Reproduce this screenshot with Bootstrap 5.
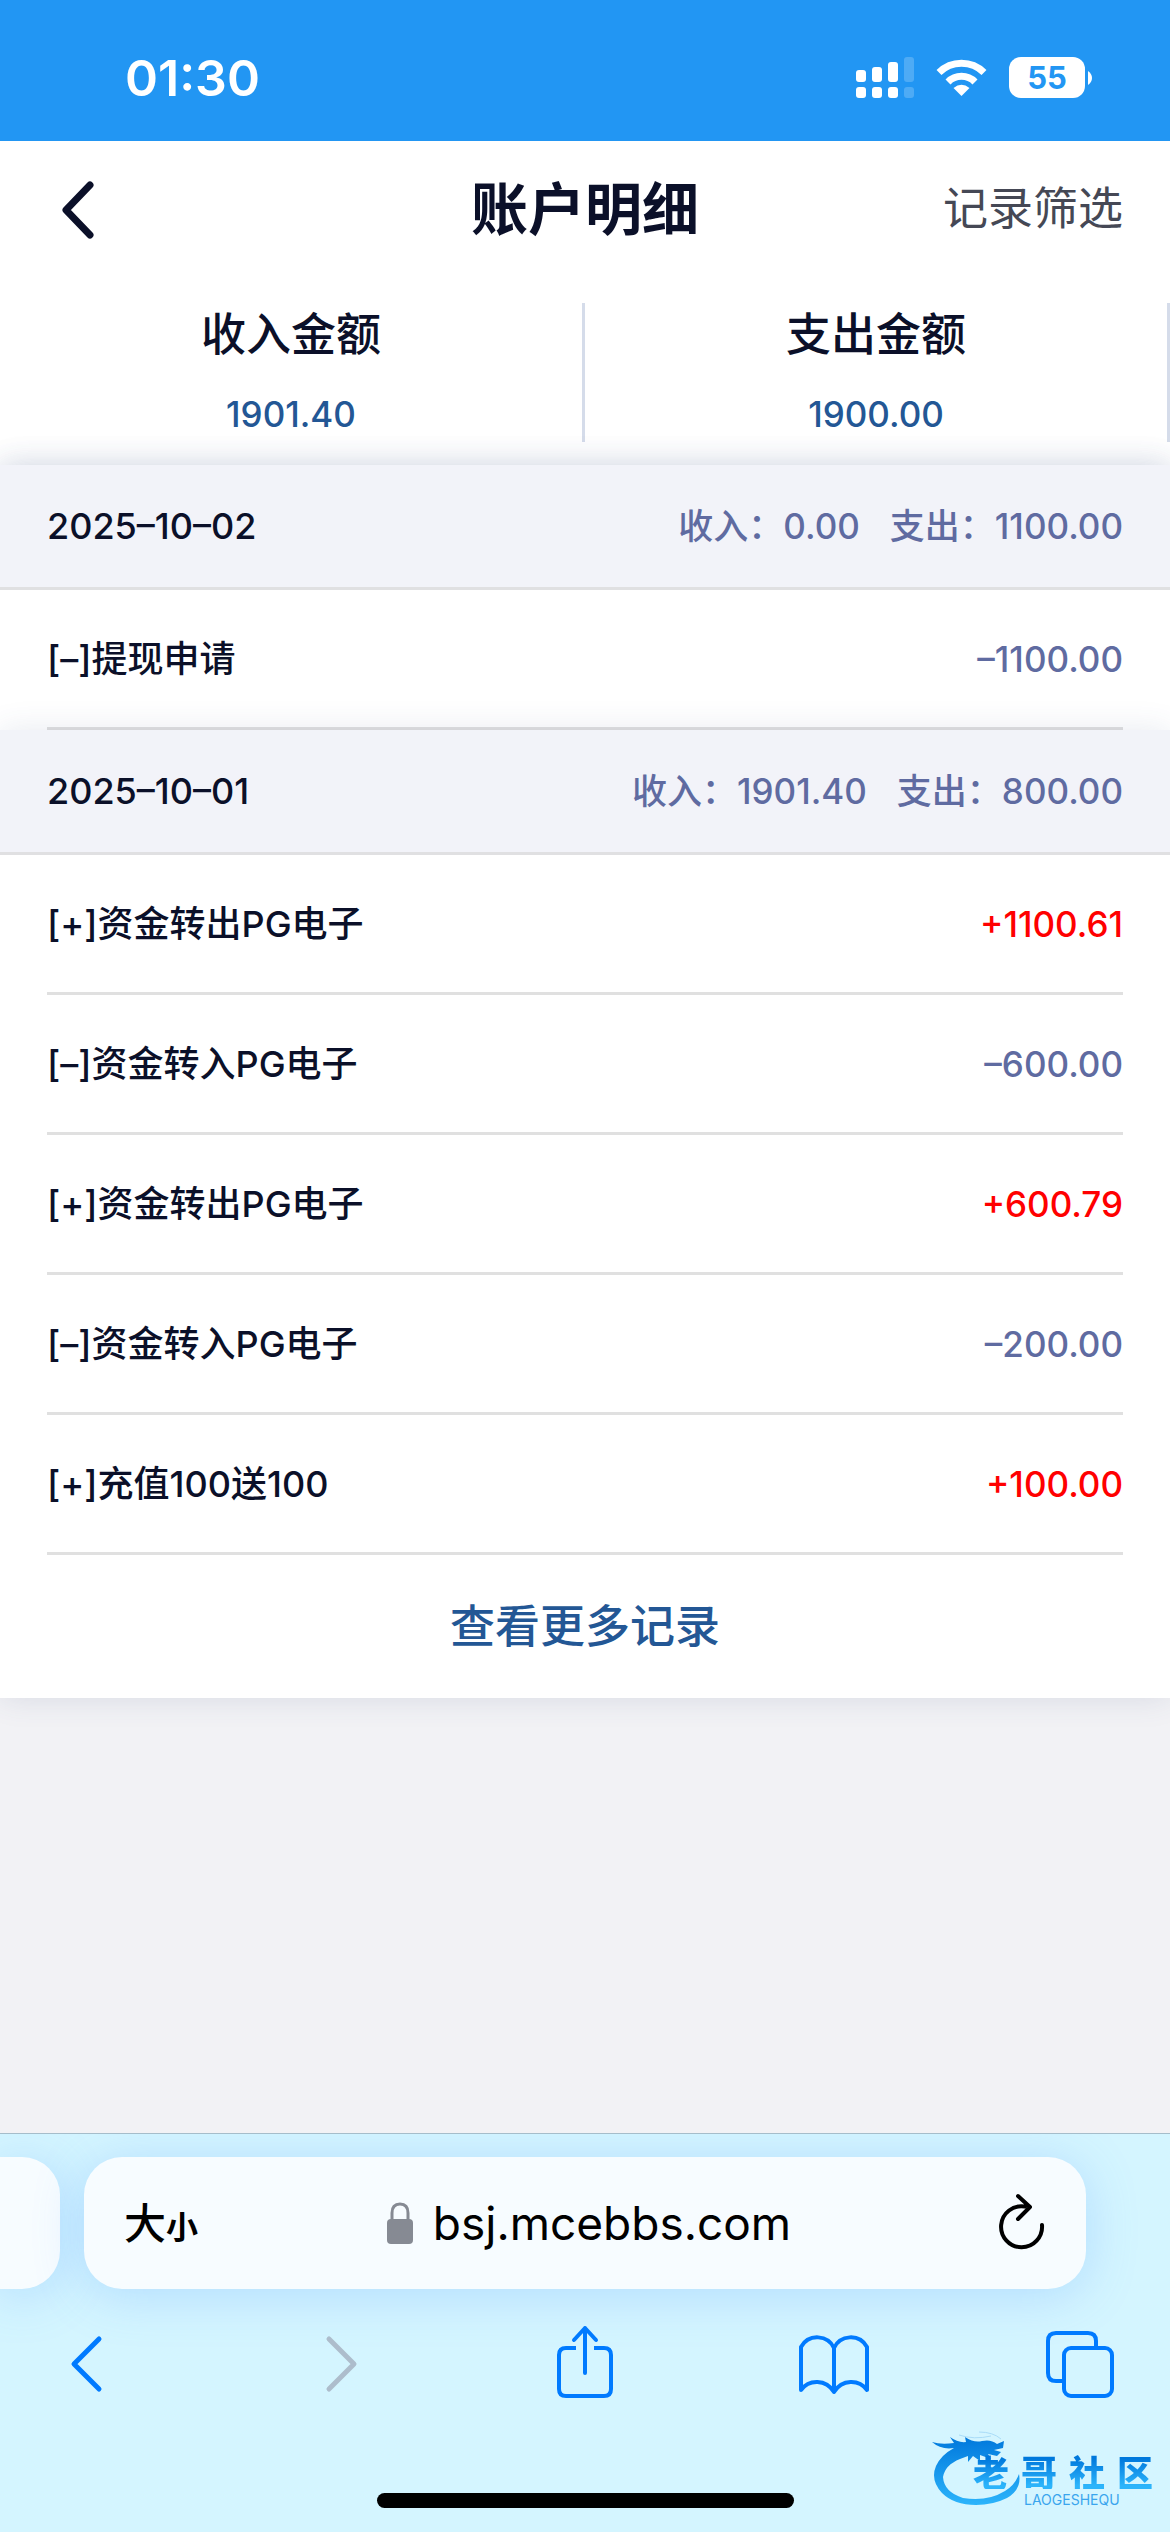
<!DOCTYPE html>
<html lang="zh-CN">
<head>
<meta charset="utf-8">
<meta name="viewport" content="width=device-width, initial-scale=1">
<title>账户明细</title>
<link href="https://cdn.jsdelivr.net/npm/bootstrap@5.3.0/dist/css/bootstrap.min.css" rel="stylesheet">
<style>
  body {
    font-family: Inter, "Noto Sans CJK SC", sans-serif;
    font-size: 36px; font-weight: 500; line-height: 54px;
    color: #0b1029; background: #f2f2f5;
  }
  .status-strip { height: 141px; padding: 14px 78px 0 125px; background: #2296f3; color: #fff; }
  .clock { font-size: 50px; font-weight: 600; line-height: 64px; }
  .status-icons { gap: 22px; }
  .battery { gap: 2px; }
  .battery-level { width: 76px; height: 41px; border-radius: 12px; background: #fff; color: #2296f3; font-size: 31px; font-weight: 700; line-height: 41px; }
  .topbar { height: 138px; padding: 0 47px; background: #fff; }
  .page-title { font-size: 57px; font-weight: 700; line-height: 72px; }
  .filter-link { font-size: 45px; font-weight: 400; color: #454855; text-decoration: none; }
  .totals { padding: 24px 0 23px; background: #fff; }
  .total-cell { height: 139px; border-right: 3px solid #d5dcea; }
  .total-label { font-size: 45px; line-height: 64px; margin-bottom: 20px; }
  .total-value { color: #235795; font-size: 35px; }
  .ledger { box-shadow: 0 0 30px rgba(60, 80, 130, .14); }
  .day-head { height: 125px; padding: 0 47px; background: #f2f3f9; border-bottom: 3px solid #e0e0e2; box-shadow: 0 0 30px rgba(60, 80, 130, .12); }
  .day-sums { gap: 30px; color: #5f6ba1; font-size: 35px; }
  .entries { padding: 0 47px; background: #fff; }
  .entry { height: 140px; border-bottom: 3px solid #e0e0e0; }
  .money-out { color: #5f6ba1; font-size: 35px; }
  .money-in { color: #f00; font-size: 35px; }
  .more-link { height: 143px; background: #fff; color: #235795; font-size: 45px; text-decoration: none; }
  .browser-bar { padding: 23px 0 24px; background: #d4f5ff; border-top: 1px solid #a5bdca; font-weight: 400; overflow: hidden; }
  .tab-row { gap: 24px; padding-right: 84px; }
  .tab-pill { height: 132px; background: #f7fcff; box-shadow: 0 6px 50px rgba(80, 150, 255, .26); }
  .tab-prev { width: 60px; border-radius: 0 38px 38px 0; }
  .tab-current { border-radius: 38px; padding: 0 40px; }
  .side-slot { width: 80px; font-weight: 500; }
  .size-label { padding-top: 6px; }
  .size-big { font-size: 42px; }
  .size-small { font-size: 32px; font-weight: 700; }
  .tool-row { padding: 0 50px; margin-top: 35px; margin-bottom: 93px; }
  .home-line { width: 417px; height: 15px; border-radius: 8px; background: #000; }
  .plain-btn { padding: 0; border: 0; background: none; color: inherit; display: flex; align-items: center; }
  .plain-btn.address { gap: 20px; padding-left: 8px; font-size: 46px; color: #000; }
  .site-logo { right: 17px; bottom: 20px; width: 224px; height: 84px; }
  .logo-text { left: 44px; right: 0; top: 25px; font-size: 36px; font-weight: 900; line-height: 36px; font-family: "Noto Sans CJK SC", sans-serif; }
  .logo-text span { background: linear-gradient(#0078dc 15%, #2cb4fb 90%); -webkit-background-clip: text; background-clip: text; color: transparent; }
  .logo-sub { left: 95px; top: 66px; font-size: 14px; line-height: 12px; color: #3aa5ee; }
  .stroke-icon { fill: none; stroke: currentColor; stroke-linecap: round; stroke-linejoin: round; }
  .tint { color: #007aff; }
  .tint-off { color: #adbdcc; }
</style>
<script src="https://cdn.jsdelivr.net/npm/bootstrap@5.3.0/dist/js/bootstrap.bundle.min.js"></script>
</head>
<body class="d-flex flex-column min-vh-100">

<div class="status-strip d-flex align-items-center justify-content-between">
  <span class="clock">01:30</span>
  <div class="status-icons d-flex align-items-center">
    <svg width="58" height="41" viewBox="0 0 58 41" fill="#fff" aria-hidden="true">
      <rect x="0" y="13" width="10" height="12" rx="3"/><rect x="16" y="10" width="10" height="15" rx="3"/><rect x="32" y="5" width="10" height="20" rx="3"/><rect x="48" y="0" width="10" height="25" rx="3" opacity=".2"/>
      <rect x="0" y="30" width="10" height="11" rx="3"/><rect x="16" y="30" width="10" height="11" rx="3"/><rect x="32" y="30" width="10" height="11" rx="3"/><rect x="48" y="30" width="10" height="11" rx="3" opacity=".2"/>
    </svg>
    <svg width="51" height="37" viewBox="0 0 51 37" aria-hidden="true">
      <path d="M3 13.500A32 32 0 0 1 48 13.500M12 23A19 19 0 0 1 39 23" fill="none" stroke="#fff" stroke-width="7"/>
      <path d="M25.500 37 17.500 29Q25.500 22.500 33.500 29Z" fill="#fff"/>
    </svg>
    <div class="battery d-flex align-items-center">
      <span class="battery-level text-center">55</span>
      <svg width="5" height="14" viewBox="0 0 5 14" fill="#fff" aria-hidden="true"><path d="M1 0Q5 3 5 7T1 14Z"/></svg>
    </div>
  </div>
</div>

<header class="topbar row g-0 align-items-center">
  <div class="col">
    <button class="plain-btn" type="button" aria-label="返回">
      <svg class="stroke-icon" width="64" height="64" viewBox="0 0 64 64" stroke-width="7"><path d="M43 7 19 32 43 57"/></svg>
    </button>
  </div>
  <h1 class="page-title col-auto mb-0">账户明细</h1>
  <div class="col text-end"><a class="filter-link" href="#">记录筛选</a></div>
</header>

<section class="totals row g-0 text-center">
  <div class="col"><div class="total-cell"><div class="total-label">收入金额</div><div class="total-value">1901.40</div></div></div>
  <div class="col"><div class="total-cell"><div class="total-label">支出金额</div><div class="total-value">1900.00</div></div></div>
</section>

<main class="ledger">
  <section>
    <div class="day-head d-flex align-items-center justify-content-between">
      <span>2025–10–02</span>
      <span class="day-sums d-flex"><span>收入：0.00</span><span>支出：1100.00</span></span>
    </div>
    <ul class="entries list-unstyled mb-0">
      <li class="entry d-flex align-items-center justify-content-between"><span>[–]提现申请</span><span class="money-out">–1100.00</span></li>
    </ul>
  </section>
  <section>
    <div class="day-head d-flex align-items-center justify-content-between">
      <span>2025–10–01</span>
      <span class="day-sums d-flex"><span>收入：1901.40</span><span>支出：800.00</span></span>
    </div>
    <ul class="entries list-unstyled mb-0">
      <li class="entry d-flex align-items-center justify-content-between"><span>[+]资金转出PG电子</span><span class="money-in">+1100.61</span></li>
      <li class="entry d-flex align-items-center justify-content-between"><span>[–]资金转入PG电子</span><span class="money-out">–600.00</span></li>
      <li class="entry d-flex align-items-center justify-content-between"><span>[+]资金转出PG电子</span><span class="money-in">+600.79</span></li>
      <li class="entry d-flex align-items-center justify-content-between"><span>[–]资金转入PG电子</span><span class="money-out">–200.00</span></li>
      <li class="entry d-flex align-items-center justify-content-between"><span>[+]充值100送100</span><span class="money-in">+100.00</span></li>
    </ul>
  </section>
  <a class="more-link d-flex align-items-center justify-content-center" href="#">查看更多记录</a>
</main>

<footer class="browser-bar position-relative mt-auto">
  <div class="tab-row d-flex">
    <div class="tab-pill tab-prev"></div>
    <div class="tab-pill tab-current flex-grow-1 d-flex align-items-center justify-content-between">
      <button class="plain-btn side-slot text-black" type="button"><span class="size-label d-flex align-items-baseline"><span class="size-big">大</span><span class="size-small">小</span></span></button>
      <button class="plain-btn address" type="button">
        <svg width="26" height="42" viewBox="0 0 26 42" aria-hidden="true"><path d="M5 20V11Q5 2 13 2T21 11V20" fill="none" stroke="#868a93" stroke-width="3"/><rect y="17" width="26" height="25" rx="4" fill="#868a93"/></svg>
        <span>bsj.mcebbs.com</span>
      </button>
      <button class="plain-btn side-slot justify-content-end text-black" type="button" aria-label="刷新">
        <svg class="stroke-icon" width="52" height="60" viewBox="0 0 52 60" stroke-width="4"><path d="M31 13.500A20.500 20.500 0 1 0 48 32M24 3 36 14 24 26"/></svg>
      </button>
    </div>
  </div>
  <nav class="tool-row d-flex justify-content-between" aria-label="浏览器工具栏">
    <button class="plain-btn tint" type="button" aria-label="后退"><svg class="stroke-icon" width="76" height="76" viewBox="0 0 76 76" stroke-width="5"><path d="M49 15 24 40 49 65"/></svg></button>
    <button class="plain-btn tint-off" type="button" aria-label="前进" disabled><svg class="stroke-icon" width="76" height="76" viewBox="0 0 76 76" stroke-width="5"><path d="M30 15 55 40 30 65"/></svg></button>
    <button class="plain-btn tint" type="button" aria-label="分享"><svg class="stroke-icon" width="76" height="76" viewBox="0 0 76 76" stroke-width="4"><path d="M29 24H19Q12 24 12 31V65Q12 72 19 72H57Q64 72 64 65V31Q64 24 57 24H47" stroke-linecap="butt"/><path d="M38 49V4M27 16 38 4 49 16"/></svg></button>
    <button class="plain-btn tint" type="button" aria-label="书签"><svg class="stroke-icon" width="76" height="76" viewBox="0 0 76 76" stroke-width="4"><path d="M38 68V24C32 11 13 9 5 23V66C13 55 30 55 38 68C46 55 63 55 71 66V23C63 9 44 11 38 24"/></svg></button>
    <button class="plain-btn tint" type="button" aria-label="标签页"><svg class="stroke-icon" width="76" height="76" viewBox="0 0 76 76" stroke-width="4"><rect x="20" y="24" width="48" height="48" rx="7"/><path d="M20 57H12Q4 57 4 49V17Q4 9 12 9H44Q52 9 52 17V24" stroke-linecap="butt"/></svg></button>
  </nav>
  <div class="home-line mx-auto"></div>
  <div class="site-logo position-absolute">
    <svg width="224" height="84" viewBox="0 0 224 84" aria-hidden="true">
      <defs><linearGradient id="dragon" x1="0" y1="0" x2="0" y2="1"><stop offset="0" stop-color="#0078dc"/><stop offset="1" stop-color="#2cb4fb"/></linearGradient></defs>
      <path fill="url(#dragon)" d="M3 14Q12 17 25 15L21 9Q29 15 37 14L36 9Q45 15 53 13Q62 11 68 16L75 13 74 20 65 22 72 24 68 28 59 26 62 31 51 27 51 33 44 28 39 34 39 28 31 31Q16 37 14 49Q15 64 34 70Q58 74 76 63Q86 57 90 46Q93 61 78 70Q64 77 47 77Q25 77 13 65Q1 52 7 38Q12 27 25 20Q12 22 3 14Z"/>
      <path d="M30 7Q45 12 62 8M50 4Q64 4 72 11" fill="none" stroke="#a9dcf8" stroke-width="1"/>
    </svg>
    <span class="logo-text position-absolute d-flex justify-content-between"><span>老</span><span>哥</span><span>社</span><span>区</span></span>
    <span class="logo-sub position-absolute">LAOGESHEQU</span>
  </div>
</footer>
</body>
</html>
